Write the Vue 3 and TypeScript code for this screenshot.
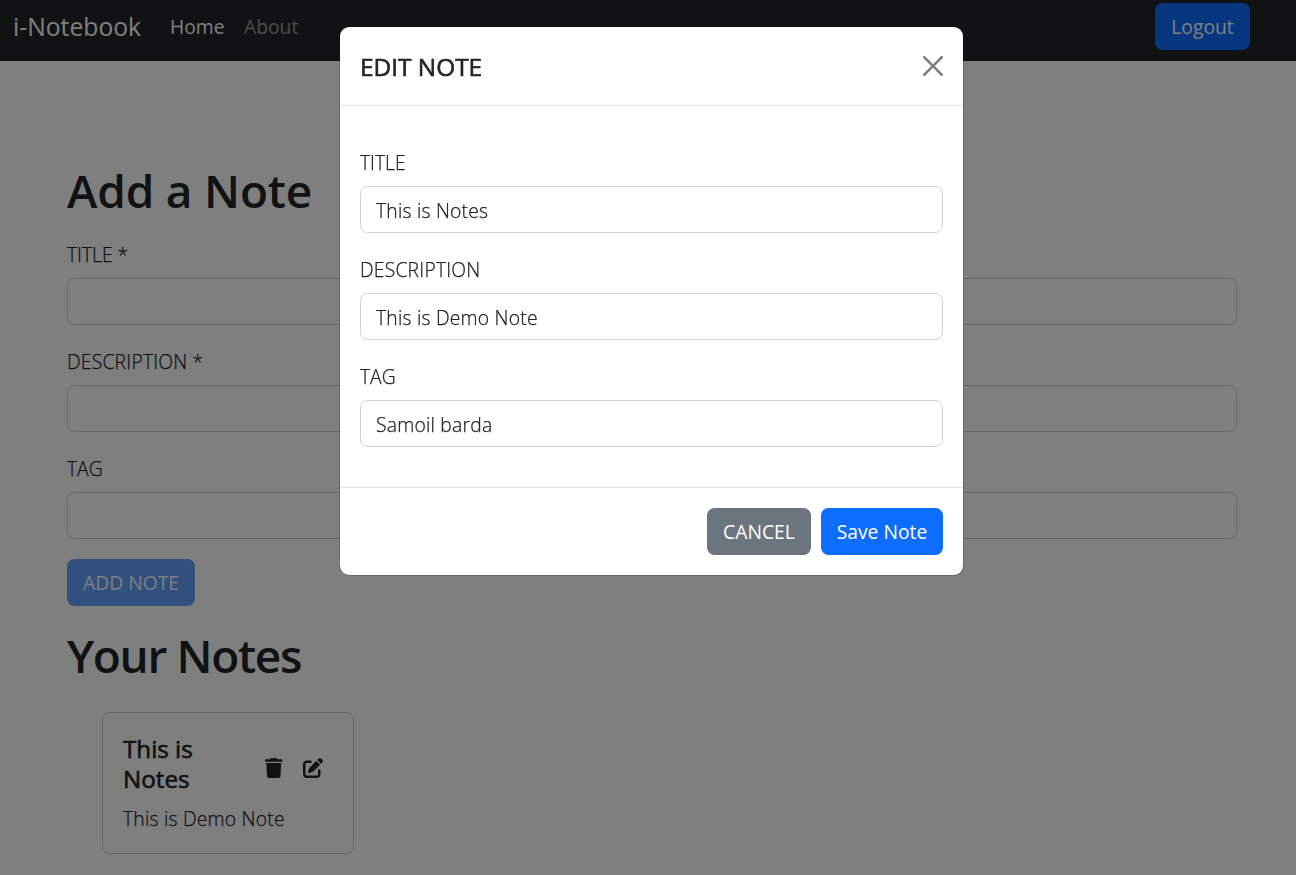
<script setup lang="ts">
import { ref } from 'vue'

interface Field {
  key: string
  label: string
  value: string
}

const addFields = ref<Field[]>([
  { key: 'title', label: 'TITLE *', value: '' },
  { key: 'description', label: 'DESCRIPTION *', value: '' },
  { key: 'tag', label: 'TAG', value: '' },
])

const editFields = ref<Field[]>([
  { key: 'title', label: 'TITLE', value: 'This is Notes' },
  { key: 'description', label: 'DESCRIPTION', value: 'This is Demo Note' },
  { key: 'tag', label: 'TAG', value: 'Samoil barda' },
])

const notes = ref([{ id: 1, title: 'This is Notes', description: 'This is Demo Note' }])
</script>

<template>
  <div class="page">
    <nav class="navbar">
      <a class="brand">i-Notebook</a>
      <a class="nav-link active">Home</a>
      <a class="nav-link">About</a>
      <button class="btn primary logout">Logout</button>
    </nav>

    <main class="container">
      <h1 class="heading">Add a Note</h1>
      <form class="add-form" @submit.prevent>
        <div v-for="f in addFields" :key="f.key" class="field">
          <label :class="['label', f.key]">{{ f.label }}</label>
          <input v-model="f.value" class="input" type="text" />
        </div>
        <button class="btn primary add" disabled>ADD NOTE</button>
      </form>

      <h1 class="heading your">Your Notes</h1>
      <div class="notes">
        <article v-for="n in notes" :key="n.id" class="card">
          <div class="card-head">
            <h5 class="card-title">{{ n.title }}</h5>
            <svg class="icon trash" viewBox="0 0 448 512">
              <path d="M135.2 17.7L128 32H32C14.3 32 0 46.3 0 64S14.3 96 32 96H416c17.7 0 32-14.3 32-32s-14.3-32-32-32H320l-7.2-14.3C307.4 6.8 296.3 0 284.2 0H163.8c-12.1 0-23.2 6.8-28.6 17.7zM416 128H32L53.2 467c1.6 25.3 22.6 45 47.9 45H346.9c25.3 0 46.3-19.7 47.9-45L416 128z" />
            </svg>
            <svg class="icon edit" viewBox="0 0 512 512">
              <path d="M471.6 21.7c-21.9-21.9-57.3-21.9-79.2 0L362.3 51.7l97.9 97.9 30.1-30.1c21.9-21.9 21.9-57.3 0-79.2L471.6 21.7zm-299.2 220c-6.1 6.1-10.8 13.6-13.5 21.9l-29.6 88.8c-2.9 8.6-.6 18.1 5.8 24.6s15.9 8.7 24.6 5.8l88.8-29.6c8.2-2.7 15.7-7.4 21.9-13.5L437.7 172.3 339.7 74.3 172.4 241.7zM96 64C43 64 0 107 0 160V416c0 53 43 96 96 96H352c53 0 96-43 96-96V320c0-17.7-14.3-32-32-32s-32 14.3-32 32v96c0 17.7-14.3 32-32 32H96c-17.7 0-32-14.3-32-32V160c0-17.7 14.3-32 32-32h96c17.7 0 32-14.3 32-32s-14.3-32-32-32H96z" />
            </svg>
          </div>
          <p class="card-text">{{ n.description }}</p>
        </article>
      </div>
    </main>

    <div class="backdrop">
      <section class="modal" role="dialog">
        <header class="modal-header">
          <h5 class="modal-title">EDIT NOTE</h5>
          <svg class="close" viewBox="0 0 16 16">
            <path d="M.293.293a1 1 0 0 1 1.414 0L8 6.586 14.293.293a1 1 0 1 1 1.414 1.414L9.414 8l6.293 6.293a1 1 0 0 1-1.414 1.414L8 9.414l-6.293 6.293a1 1 0 0 1-1.414-1.414L6.586 8 .293 1.707a1 1 0 0 1 0-1.414z" />
          </svg>
        </header>
        <div class="modal-body">
          <div v-for="f in editFields" :key="f.key" class="field">
            <label :class="['label', f.key]">{{ f.label }}</label>
            <input v-model="f.value" class="input" type="text" />
          </div>
        </div>
        <footer class="modal-footer">
          <button class="btn secondary">CANCEL</button>
          <button class="btn primary save">Save Note</button>
        </footer>
      </section>
    </div>
  </div>
</template>

<style>
body {
  margin: 0;
  overflow: hidden;
}
</style>

<style scoped>
.page,
.page * {
  box-sizing: border-box;
}
.page {
  height: 875px;
  overflow: hidden;
  background: #fff;
  color: #212529;
  font: 400 19.3px/30px 'Open Sans', 'Noto Sans', sans-serif;
}
.navbar {
  display: flex;
  align-items: center;
  height: 61px;
  padding: 0 46px 8px 13px;
  background: #212529;
  color: #fff;
}
.brand {
  width: 157px;
  font-size: 24.7px;
}
.nav-link {
  width: 74px;
  color: rgba(255, 255, 255, 0.55);
}
.nav-link.active {
  color: #fff;
}
.btn {
  height: 47px;
  padding: 1px 0 0;
  border: 0;
  border-radius: 7.5px;
  color: #fff;
  font: inherit;
  line-height: 46px;
  white-space: nowrap;
}
.primary {
  background: #0d6efd;
}
.secondary {
  width: 104px;
  background: #6c757d;
}
.logout {
  width: 95px;
  margin-left: auto;
}
.add {
  display: block;
  width: 128px;
  opacity: 0.65;
}
.save {
  width: 122px;
}
.container {
  width: 1170px;
  margin-left: 67px;
  padding-top: 101px;
}
.heading {
  margin: 0;
  font-size: 46px;
  font-weight: 600;
  letter-spacing: -0.2px;
  line-height: 56px;
}
.add-form {
  padding-top: 20px;
}
.field {
  display: flex;
  flex-direction: column;
  gap: 10px;
  margin-bottom: 20px;
}
.label,
.input,
.card-text {
  font-weight: 300;
  letter-spacing: 0.22px;
  -webkit-text-stroke: 0.25px currentColor;
}
.label {
  height: 30px;
  line-height: 33px;
}
.label.tag,
.label.title {
  letter-spacing: 0;
}
.input {
  width: 100%;
  height: 47px;
  padding: 1px 15px 0;
  border: 1px solid #ced4da;
  border-radius: 7.5px;
  outline: none;
  background: #fff;
  color: #212529;
  font-family: inherit;
  font-size: inherit;
}
.your {
  margin-top: 21px;
  letter-spacing: -1.35px;
}
.notes {
  padding: 29px 0 0 35px;
}
.card {
  width: 252px;
  height: 142px;
  padding: 21px 20px 19px;
  border: 1px solid rgba(0, 0, 0, 0.175);
  border-radius: 7.5px;
}
.card-head {
  display: flex;
  align-items: center;
}
.card-title {
  width: 142px;
  margin: 0;
  padding-right: 40px;
  font-size: 24.2px;
  font-weight: 400;
  -webkit-text-stroke: 0.6px currentColor;
  line-height: 30px;
}
.icon {
  height: 20px;
  margin-top: 7px;
  fill: #212529;
}
.trash {
  width: 17.5px;
}
.edit {
  width: 20px;
  margin-left: 20px;
}
.card-text {
  margin: 10px 0 0;
}
.backdrop {
  position: fixed;
  inset: 0;
  display: flex;
  align-items: flex-start;
  padding: 26px 0 0 339px;
  background: rgba(0, 0, 0, 0.5);
}
.modal {
  width: 625px;
  border: 1px solid rgba(0, 0, 0, 0.175);
  border-radius: 10px;
  background: #fff;
  background-clip: padding-box;
}
.modal-header {
  display: flex;
  align-items: center;
  justify-content: space-between;
  height: 79px;
  padding: 0 20px;
  border-bottom: 1px solid #dee2e6;
}
.modal-title {
  margin: 0;
  padding-top: 2px;
  font-size: 24.4px;
  font-weight: 400;
  -webkit-text-stroke: 0.6px currentColor;
}
.close {
  width: 20px;
  height: 20px;
  fill: #000;
  opacity: 0.5;
}
.modal-body {
  padding: 40px 20px 20px;
}
.modal-footer {
  display: flex;
  justify-content: flex-end;
  gap: 10px;
  padding: 20px;
  border-top: 1px solid #dee2e6;
}
</style>
